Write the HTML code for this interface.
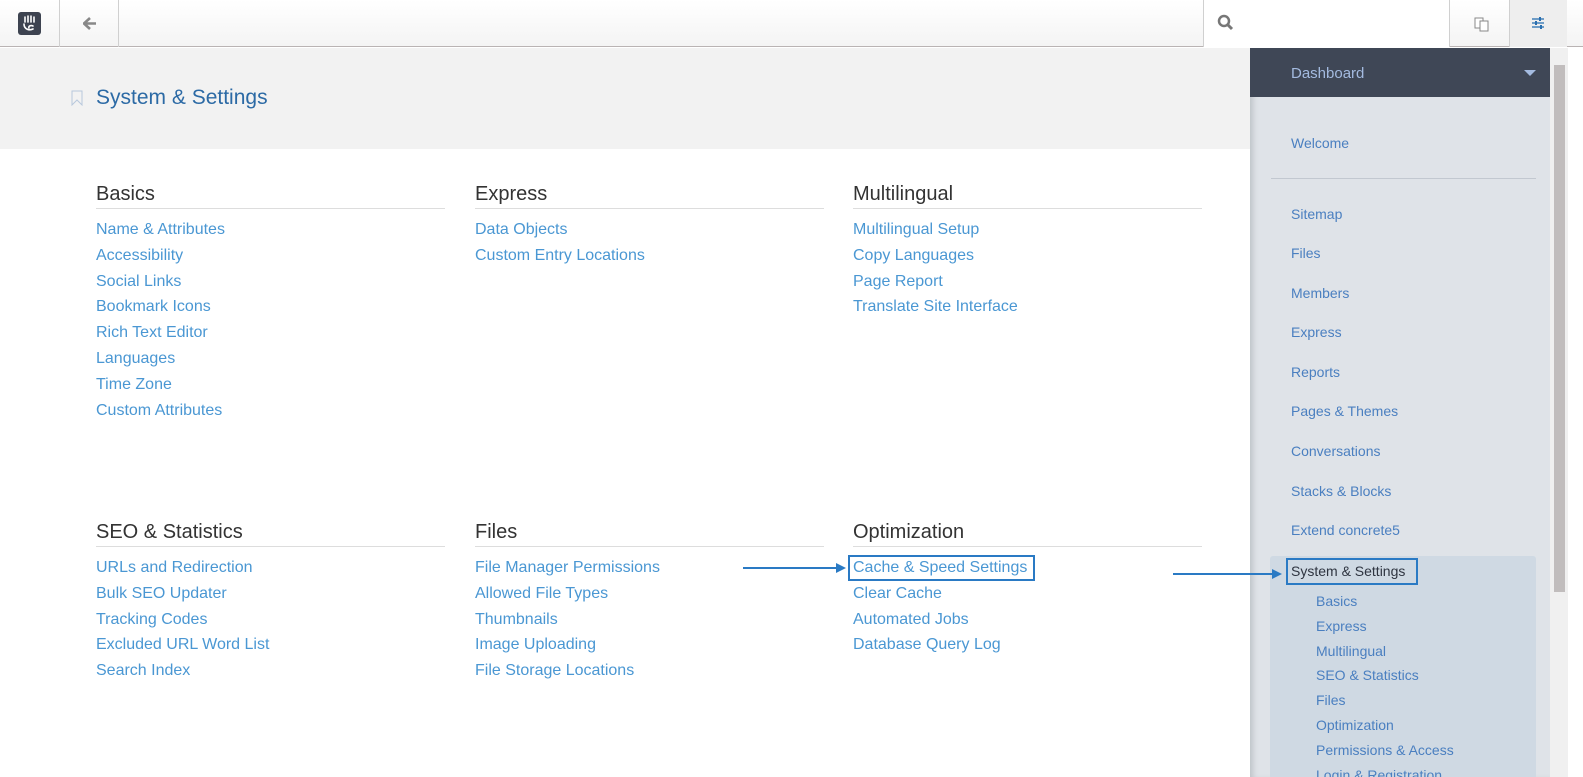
<!DOCTYPE html>
<html><head><meta charset="utf-8"><style>
*{margin:0;padding:0;box-sizing:border-box}
html,body{overflow:hidden}
body{width:1583px;height:777px;background:#fff;font-family:"Liberation Sans",sans-serif;position:relative}
.a{position:absolute}
.top{left:0;top:0;width:1583px;height:47px;background:linear-gradient(#fff,#f4f4f4);border-bottom:1px solid #b9b3b3}
.vl{top:0;width:1px;height:47px;background:#d0d0d0}
.hdr{left:0;top:48px;width:1250px;height:101px;background:#f2f2f2}
.col{width:349px}
.col h3{font-weight:normal;font-size:20px;color:#333;height:30px;line-height:30px;border-bottom:1px solid #ddd;margin-bottom:8px}
.col a{display:block;color:#4a97d3;font-size:16px;line-height:25.8px;text-decoration:none}
.sb{left:1250px;top:48px;width:300px;height:729px;background:#dfe3e8;box-shadow:inset 6px 0 6px -3px #bfc3c8}
.sb div.i{position:absolute;left:41px;color:#4a7fc0;font-size:14px}
.sub{position:absolute;left:66px;color:#4a7fc0;font-size:14px}
</style></head><body>
<div class="a top"></div>
<div class="a" style="left:18px;top:12px;width:23px;height:23px;background:#3d4350;border-radius:3px"></div>
<svg class="a" style="left:18px;top:12px" width="23" height="23"><g stroke="#fff" stroke-width="1.6" fill="none" stroke-linecap="round"><path d="M7 5V10M10 4V10M13 4V10M16 5V10"/><path d="M6 12C6 17 11 19 15 17M15 14C13 13 10 14 11 16"/></g></svg>
<div class="a vl" style="left:59px"></div>
<svg class="a" style="left:83px;top:17px" width="14" height="13"><path d="M7 1L1 6.5L7 12M1.5 6.5H13" stroke="#888" stroke-width="2.6" fill="none"/></svg>
<div class="a vl" style="left:118px"></div>
<div class="a" style="left:1203px;top:0;width:247px;height:47px;background:#fff;border-left:1px solid #d0d0d0;border-right:1px solid #d0d0d0"></div>
<svg class="a" style="left:1217px;top:14px" width="18" height="18"><circle cx="7" cy="7" r="5" fill="none" stroke="#777" stroke-width="2.5"/><line x1="11" y1="11" x2="15" y2="15" stroke="#777" stroke-width="3"/></svg>
<svg class="a" style="left:1474px;top:16px" width="16" height="16"><rect x="1" y="2" width="8" height="10" fill="#fff" stroke="#888"/><rect x="6" y="5" width="8" height="10" fill="#fff" stroke="#888"/></svg>
<div class="a" style="left:1509px;top:0;width:58px;height:47px;background:#eee;border-left:1px solid #d0d0d0"></div>
<svg class="a" style="left:1532px;top:17px" width="14" height="12"><g stroke="#2a6fb0" stroke-width="1.3"><line x1="0" y1="2" x2="12" y2="2"/><line x1="0" y1="6" x2="12" y2="6"/><line x1="0" y1="10" x2="12" y2="10"/></g><g fill="#2a6fb0"><rect x="7" y="0" width="2" height="4"/><rect x="3" y="4" width="2" height="4"/><rect x="8" y="8" width="2" height="4"/></g></svg>
<div class="a hdr"></div>
<svg class="a" style="left:71px;top:90px" width="13" height="16"><path d="M1 1H11V15L6 10L1 15Z" fill="none" stroke="#b8c8dc"/></svg>
<div class="a" style="left:96px;top:86px;font-size:21px;color:#2c6aa5">System &amp; Settings</div>

<div class="a col" style="left:96px;top:179px"><h3>Basics</h3><a>Name &amp; Attributes</a><a>Accessibility</a><a>Social Links</a><a>Bookmark Icons</a><a>Rich Text Editor</a><a>Languages</a><a>Time Zone</a><a>Custom Attributes</a></div>
<div class="a col" style="left:475px;top:179px"><h3>Express</h3><a>Data Objects</a><a>Custom Entry Locations</a></div>
<div class="a col" style="left:853px;top:179px"><h3>Multilingual</h3><a>Multilingual Setup</a><a>Copy Languages</a><a>Page Report</a><a>Translate Site Interface</a></div>
<div class="a col" style="left:96px;top:517px"><h3>SEO &amp; Statistics</h3><a>URLs and Redirection</a><a>Bulk SEO Updater</a><a>Tracking Codes</a><a>Excluded URL Word List</a><a>Search Index</a></div>
<div class="a col" style="left:475px;top:517px"><h3>Files</h3><a>File Manager Permissions</a><a>Allowed File Types</a><a>Thumbnails</a><a>Image Uploading</a><a>File Storage Locations</a></div>
<div class="a col" style="left:853px;top:517px"><h3>Optimization</h3><a>Cache &amp; Speed Settings</a><a>Clear Cache</a><a>Automated Jobs</a><a>Database Query Log</a></div>
<div class="a" style="left:848px;top:555px;width:187px;height:26px;border:2px solid #2a7ac4"></div>
<div class="a" style="left:743px;top:567px;width:95px;height:2px;background:#2a7ac4"></div>
<div class="a" style="left:836px;top:563px;border-left:10px solid #2a7ac4;border-top:5px solid transparent;border-bottom:5px solid transparent"></div>

<div class="a sb">
<div style="position:absolute;left:0;top:0;width:300px;height:49px;background:#3f4756"></div>
<div style="position:absolute;left:41px;top:17px;color:#a4bbe0;font-size:15px">Dashboard</div>
<div style="position:absolute;left:274px;top:22px;border-top:6px solid #a4bbe0;border-left:6px solid transparent;border-right:6px solid transparent"></div>
<div class="i" style="top:87px">Welcome</div>
<div style="position:absolute;left:21px;top:130px;width:265px;height:1px;background:#c2c8d0"></div>
<div class="i" style="top:158px">Sitemap</div>
<div class="i" style="top:197px">Files</div>
<div class="i" style="top:237px">Members</div>
<div class="i" style="top:276px">Express</div>
<div class="i" style="top:316px">Reports</div>
<div class="i" style="top:355px">Pages &amp; Themes</div>
<div class="i" style="top:395px">Conversations</div>
<div class="i" style="top:435px">Stacks &amp; Blocks</div>
<div class="i" style="top:474px">Extend concrete5</div>
<div style="position:absolute;left:20px;top:508px;width:266px;height:230px;background:#cfd9e3;border-radius:3px"></div>
<div style="position:absolute;left:36px;top:510px;width:132px;height:27px;border:2px solid #2a7ac4"></div>
<div style="position:absolute;left:41px;top:515px;color:#2e3440;font-size:14px">System &amp; Settings</div>
<div class="sub" style="top:545px">Basics</div>
<div class="sub" style="top:570px">Express</div>
<div class="sub" style="top:595px">Multilingual</div>
<div class="sub" style="top:619px">SEO &amp; Statistics</div>
<div class="sub" style="top:644px">Files</div>
<div class="sub" style="top:669px">Optimization</div>
<div class="sub" style="top:694px">Permissions &amp; Access</div>
<div class="sub" style="top:719px">Login &amp; Registration</div>
</div>
<div class="a" style="left:1173px;top:573px;width:100px;height:2px;background:#2a7ac4"></div>
<div class="a" style="left:1272px;top:569px;border-left:10px solid #2a7ac4;border-top:5px solid transparent;border-bottom:5px solid transparent"></div>
<div class="a" style="left:1550px;top:48px;width:18px;height:729px;background:#f0f0f0"></div>
<div class="a" style="left:1554px;top:65px;width:11px;height:527px;background:#c1bdbd"></div>
<div class="a" style="left:1568px;top:48px;width:15px;height:729px;background:#fff"></div>
</body></html>
